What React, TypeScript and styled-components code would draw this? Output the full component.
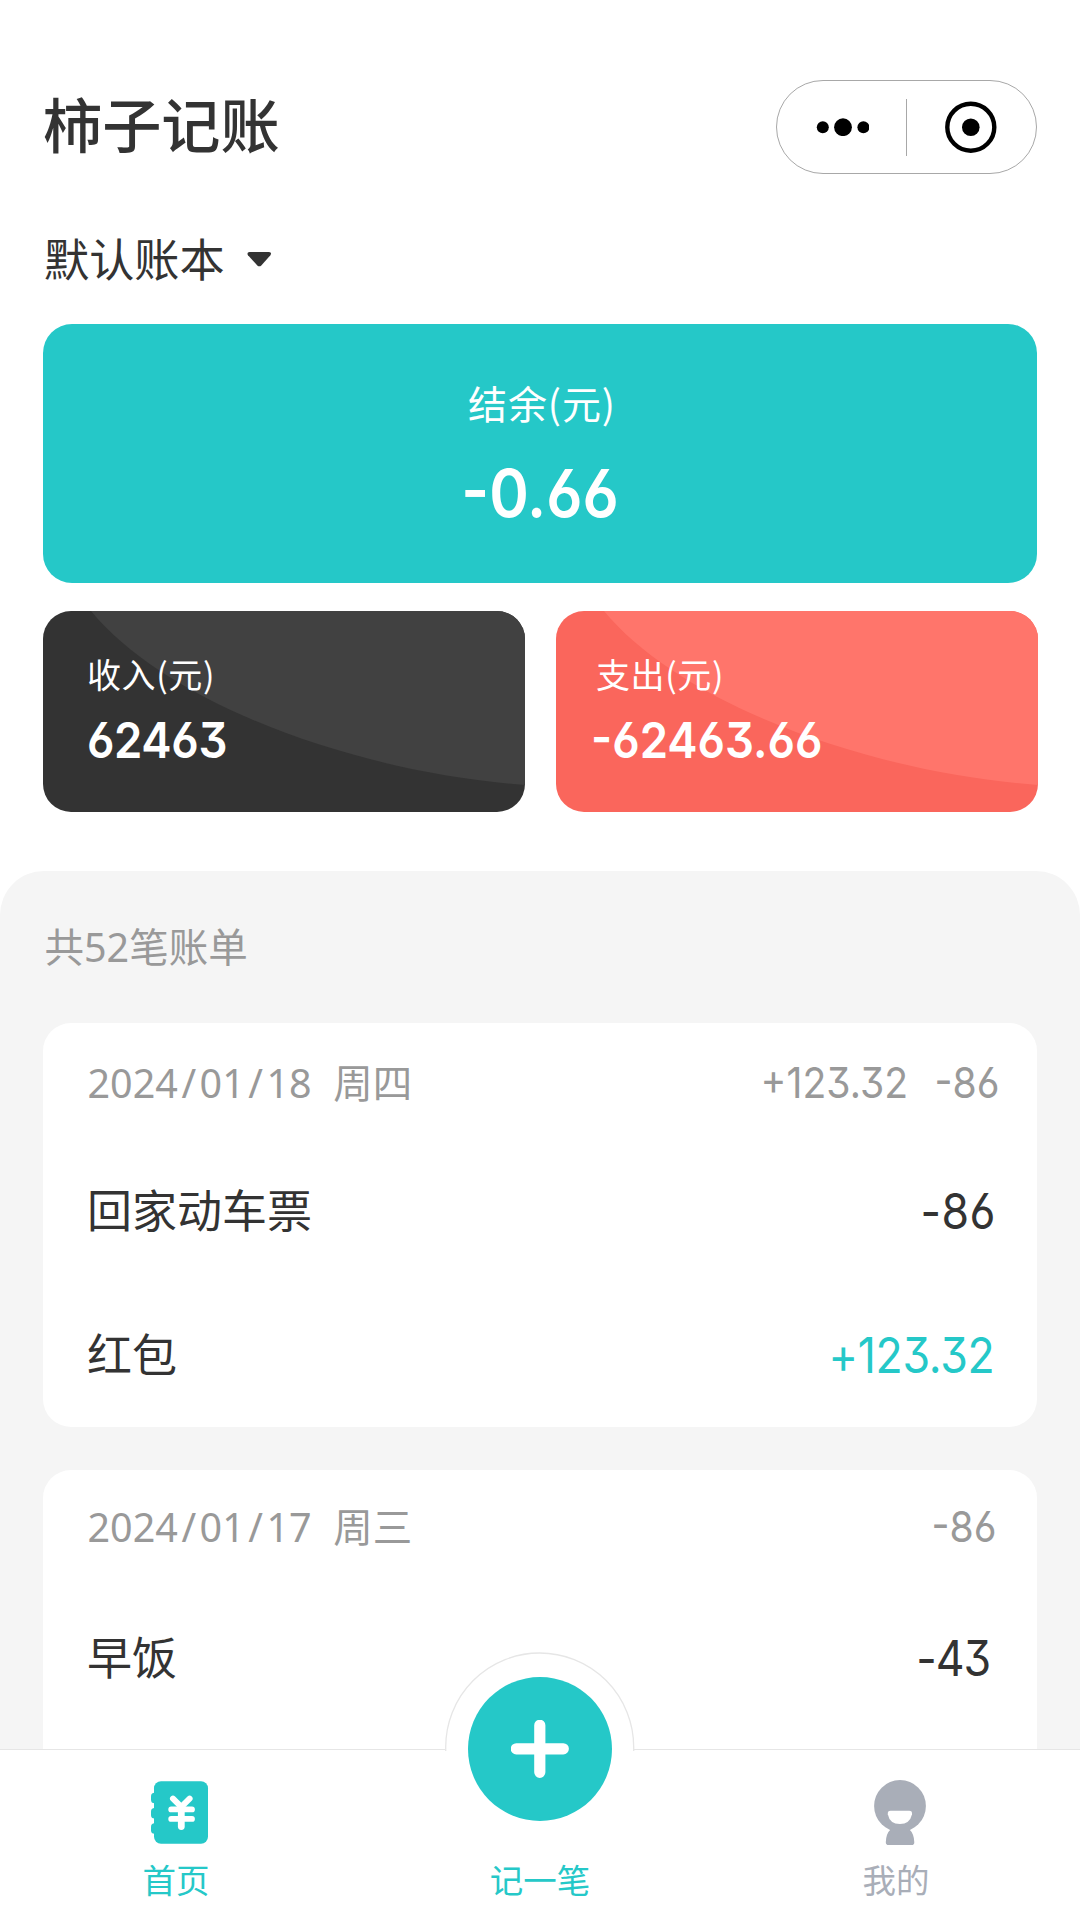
import React from "react";
import styled, { createGlobalStyle, css } from "styled-components";

const TEAL = "#25c8c8";
const INK = "#333333";
const MUTED = "#999999";
const IDLE = "#a9aeb8";

const CJK = `"Noto Sans CJK SC", sans-serif`;
const MIXED = `"Noto Sans", "Noto Sans CJK SC", sans-serif`;

/* Condensed figures with a flat-topped 3 and open 6 and 9. */
const figures = css`
  font-family: Inter, sans-serif;
  font-feature-settings: "cv09", "cv03", "cv04";
  transform: scaleX(0.91);
`;

const GlobalStyle = createGlobalStyle`
  * { box-sizing: border-box; }
  body { margin: 0; background: #fff; }
`;

const Screen = styled.div`
  width: 1080px;
  height: 1920px;
  display: flex;
  flex-direction: column;
  overflow: hidden;
  background: #fff;
  color: ${INK};
  font-family: ${CJK};
  white-space: nowrap;
`;

const Top = styled.header`
  flex: none;
  padding: 80px 43px 0;
`;

const TitleBar = styled.div`
  height: 94px;
  display: flex;
  justify-content: space-between;
  align-items: flex-start;
`;

const Title = styled.h1`
  margin: 0;
  font-size: 59.2px;
  font-weight: 500;
  line-height: 84px;
`;

const Capsule = styled.div`
  width: 261px;
  height: 94px;
  display: flex;
  align-items: center;
  border: 1.5px solid #a8a8a8;
  border-radius: 47px;
`;

const CapsuleHalf = styled.div`
  flex: 1;
  display: flex;
  align-items: center;
  justify-content: center;
`;

const CapsuleRule = styled.div`
  width: 1px;
  height: 57px;
  background: #a8a8a8;
`;

const Ledger = styled.div`
  height: 56px;
  margin-top: 54px;
  padding: 3px 0 0 1px;
  display: flex;
  align-items: center;
  gap: 22px;
  font-size: 45.2px;
  line-height: 56px;
`;

const Arrow = styled.svg`
  margin-top: 3px;
`;

const Balance = styled.section`
  height: 259px;
  margin-top: 40px;
  padding-top: 53px;
  border-radius: 29px;
  background: ${TEAL};
  color: #fff;
  text-align: center;
`;

const BalanceLabel = styled.div`
  padding-left: 4px;
  font-size: 39px;
  line-height: 50px;
  letter-spacing: 0.9px;
`;

const BalanceValue = styled.div`
  ${figures}
  margin-top: 26px;
  font-size: 66px;
  font-weight: 560;
  line-height: 80px;
`;

const Stats = styled.div`
  margin-top: 28px;
  width: 995px;
  display: grid;
  grid-template-columns: 482px 482px;
  gap: 31px;
`;

const StatCard = styled.section<{ $bg: string; $inset: number }>`
  position: relative;
  height: 201px;
  padding: 41px 0 0 ${(p) => p.$inset}px;
  border-radius: 28px;
  overflow: hidden;
  background: ${(p) => p.$bg};
  color: #fff;
`;

const Sheen = styled.svg`
  position: absolute;
  inset: 0;
`;

const StatLabel = styled.div`
  position: relative;
  font-size: 34px;
  line-height: 44px;
  letter-spacing: 0.6px;
`;

const StatValue = styled.div<{ $shift?: number; $track?: number }>`
  ${figures}
  transform-origin: left center;
  position: relative;
  margin: 14px 0 0 ${(p) => p.$shift ?? 0}px;
  font-size: 50px;
  font-weight: 560;
  line-height: 60px;
  letter-spacing: ${(p) => p.$track ?? 0}px;
`;

const Bills = styled.main`
  flex: 1;
  min-height: 0;
  margin-top: 59px;
  padding: 47px 43px 0;
  border-radius: 44px 44px 0 0;
  background: #f5f5f5;
  overflow: hidden;
`;

const Count = styled.div`
  padding: 1px 0 0 1.5px;
  height: 56px;
  color: ${MUTED};
  font-family: ${MIXED};
  font-size: 39.5px;
  line-height: 56px;
`;

const DayCard = styled.section`
  height: 404px;
  margin-bottom: 43px;
  padding: 0 0 2px 44px;
  border-radius: 28px;
  background: #fff;

  ${Count} + & {
    margin-top: 49px;
  }
`;

const DayHead = styled.div<{ $top: number }>`
  height: 114px;
  padding: ${(p) => p.$top}px 0 0 0.5px;
  display: flex;
  justify-content: space-between;
  align-items: flex-start;
  color: ${MUTED};
  line-height: 60px;
`;

const DayDate = styled.div`
  font-family: ${MIXED};
  font-size: 39.5px;
`;

const Slash = styled.span`
  padding: 0 3.5px;
`;

const Weekday = styled.span`
  margin-left: 21.5px;
`;

const DayTotals = styled.div<{ $end: number }>`
  ${figures}
  transform-origin: right center;
  display: flex;
  gap: 29px;
  margin-right: ${(p) => p.$end}px;
  font-size: 43px;
  line-height: 59px;
`;

const Bill = styled.div`
  height: 144px;
  display: flex;
  align-items: center;
  justify-content: space-between;
  font-size: 45px;
  line-height: 60px;
`;

const Amount = styled.span<{ $income?: boolean; $end: number; $track?: number }>`
  ${figures}
  transform-origin: right center;
  margin: 5px ${(p) => p.$end}px 0 0;
  color: ${(p) => (p.$income ? TEAL : INK)};
  font-size: 49px;
  letter-spacing: ${(p) => p.$track ?? 0}px;
`;

const TabBar = styled.nav`
  position: relative;
  flex: none;
  height: 171px;
  display: grid;
  grid-template-columns: repeat(3, 360px);
  border-top: 1.5px solid #e6e6e6;
  background: #fff;
`;

const Tab = styled.div<{ $active?: boolean }>`
  display: flex;
  flex-direction: column;
  align-items: center;
  padding-top: 30px;
  color: ${(p) => (p.$active ? TEAL : IDLE)};
`;

const TabIcon = styled.div`
  height: 66px;
`;

const TabLabel = styled.div<{ $pull?: number }>`
  margin: 11px ${(p) => p.$pull ?? 0}px 0 0;
  font-size: 33.5px;
  line-height: 44px;
`;

const AddBump = styled.svg`
  position: absolute;
  left: 445px;
  top: -98px;
`;

const AddButton = styled.div`
  position: absolute;
  left: 468px;
  top: -73px;
  width: 144px;
  height: 144px;
  border-radius: 50%;
  display: grid;
  place-items: center;
  background: ${TEAL};
`;

const CurvedSheen = ({ color }: { color: string }) => (
  <Sheen width="482" height="201" viewBox="0 0 482 201">
    <path d="M48 0 C123 91 308 161 482 174 V0Z" fill={color} />
  </Sheen>
);

const BookIcon = () => (
  <svg width="58" height="66" viewBox="0 -1.3 58 66">
    <g fill={TEAL}>
      <rect x="3" y="0" width="54" height="62.4" rx="7" />
      <rect x="0" y="11.5" width="9" height="10.5" rx="3.6" />
      <rect x="0" y="26.8" width="9" height="10.5" rx="3.6" />
      <rect x="0" y="42" width="9" height="10.5" rx="3.6" />
    </g>
    <g fill="none" stroke="#fff" strokeLinecap="round" strokeLinejoin="round">
      <path d="M22 17.4 30.3 25.6 38.6 17.4" strokeWidth="6" />
      <path d="M20.2 28.1H41M20.2 37.6H41" strokeWidth="5.8" />
      <path d="M30.3 26V45.2" strokeWidth="6.8" />
    </g>
  </svg>
);

const PersonIcon = () => (
  <svg width="52" height="66" viewBox="0 0 52 66">
    <g fill={IDLE}>
      <circle cx="26" cy="26" r="25.9" />
      <path d="M17 49Q12 53.5 11.8 62.2Q11.8 65 14.6 65H37.6Q40.4 65 40.3 62.2Q40 53.5 35 49L34 46H18Z" />
    </g>
    <path
      d="M16.6 30.8H35.2Q38.4 30.8 38 34.2Q35.8 44 25.9 44Q15.8 44 13.8 34.2Q13.4 30.8 16.6 30.8Z"
      fill="#fff"
    />
  </svg>
);

const DateText = ({ parts, weekday }: { parts: string[]; weekday: string }) => (
  <DayDate>
    {parts.map((part, i) => (
      <React.Fragment key={i}>
        {i > 0 && <Slash>/</Slash>}
        {part}
      </React.Fragment>
    ))}
    <Weekday>{weekday}</Weekday>
  </DayDate>
);

export default function App() {
  return (
    <Screen>
      <GlobalStyle />
      <Top>
        <TitleBar>
          <Title>柿子记账</Title>
          <Capsule>
            <CapsuleHalf>
              <svg width="54" height="18" viewBox="0 0 54 18">
                <circle cx="7.8" cy="9.2" r="6" />
                <circle cx="28" cy="9.2" r="8.9" />
                <circle cx="48.4" cy="9.2" r="6" />
              </svg>
            </CapsuleHalf>
            <CapsuleRule />
            <CapsuleHalf>
              <svg width="54" height="52" viewBox="0 0 54 52">
                <circle cx="25.8" cy="26.2" r="23.5" fill="none" stroke="#000" strokeWidth="4.4" />
                <circle cx="25.8" cy="26.2" r="8.8" />
              </svg>
            </CapsuleHalf>
          </Capsule>
        </TitleBar>
        <Ledger>
          默认账本
          <Arrow width="25" height="15" viewBox="0 0 25 15">
            <path
              d="M2.5 0H22Q25.2 .6 23.4 3.2L14.3 13.4Q12.3 15.2 10.3 13.4L1 3.2Q-.6 .6 2.5 0Z"
              fill={INK}
            />
          </Arrow>
        </Ledger>
        <Balance>
          <BalanceLabel>结余(元)</BalanceLabel>
          <BalanceValue>-0.66</BalanceValue>
        </Balance>
        <Stats>
          <StatCard $bg="#333333" $inset={44}>
            <CurvedSheen color="#414141" />
            <StatLabel>收入(元)</StatLabel>
            <StatValue $track={-0.4}>62463</StatValue>
          </StatCard>
          <StatCard $bg="#fa665c" $inset={40}>
            <CurvedSheen color="#ff756b" />
            <StatLabel>支出(元)</StatLabel>
            <StatValue $shift={-5}>-62463.66</StatValue>
          </StatCard>
        </Stats>
      </Top>

      <Bills>
        <Count>共52笔账单</Count>
        <DayCard>
          <DayHead $top={30}>
            <DateText parts={["2024", "01", "18"]} weekday="周四" />
            <DayTotals $end={38}>
              <span>+123.32</span>
              <span>-86</span>
            </DayTotals>
          </DayHead>
          <Bill>
            回家动车票
            <Amount $end={41} $track={0.5}>-86</Amount>
          </Bill>
          <Bill>
            红包
            <Amount $income $end={43} $track={-0.3}>+123.32</Amount>
          </Bill>
        </DayCard>
        <DayCard>
          <DayHead $top={27}>
            <DateText parts={["2024", "01", "17"]} weekday="周三" />
            <DayTotals $end={41}>
              <span>-86</span>
            </DayTotals>
          </DayHead>
          <Bill>
            早饭
            <Amount $end={47} $track={-1.2}>-43</Amount>
          </Bill>
        </DayCard>
      </Bills>

      <TabBar>
        <Tab $active>
          <TabIcon><BookIcon /></TabIcon>
          <TabLabel $pull={8}>首页</TabLabel>
        </Tab>
        <Tab $active>
          <TabIcon />
          <TabLabel>记一笔</TabLabel>
        </Tab>
        <Tab>
          <TabIcon><PersonIcon /></TabIcon>
          <TabLabel $pull={8}>我的</TabLabel>
        </Tab>
        <AddBump width="190" height="100" viewBox="0 0 190 100">
          <path d="M.7 100V95A94 94 0 0 1 188.7 95V100Z" fill="#fff" />
          <path d="M.7 99V95A94 94 0 0 1 188.7 95V99" fill="none" stroke="#e6e6e6" strokeWidth="1.3" />
        </AddBump>
        <AddButton>
          <svg width="58" height="58" viewBox="0 0 58 58">
            <path d="M28.8 5.3V52.3M5.3 28.8H52.3" stroke="#fff" strokeWidth="11.2" strokeLinecap="round" />
          </svg>
        </AddButton>
      </TabBar>
    </Screen>
  );
}
